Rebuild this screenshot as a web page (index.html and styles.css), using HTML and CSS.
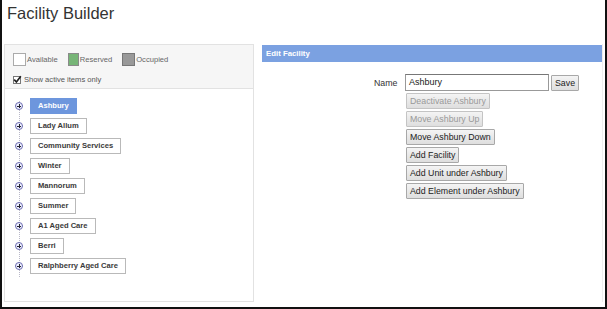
FILE: index.html
```
<!DOCTYPE html>
<html>
<head>
<meta charset="utf-8">
<link rel="stylesheet" href="styles.css">
</head>
<body>
<div class="page">
  <h1 class="title">Facility Builder</h1>
  <div class="main">
    <div class="left">
      <div class="legend-area">
        <div class="legend">
          <span class="swatch sw-avail"></span><span class="lg-text">Available</span>
          <span class="swatch sw-res"></span><span class="lg-text">Reserved</span>
          <span class="swatch sw-occ"></span><span class="lg-text">Occupied</span>
        </div>
        <label class="active-only"><span class="cb"><svg width="9" height="9" viewBox="0 0 9 9"><path d="M1.2 4.6 L3.4 7 L7.8 1.2" fill="none" stroke="#222" stroke-width="1.7"/></svg></span>Show active items only</label>
      </div>
      <div class="tree">
        <div class="row"><span class="plus"></span><span class="node sel">Ashbury</span></div>
        <div class="row"><span class="plus"></span><span class="node">Lady Allum</span></div>
        <div class="row"><span class="plus"></span><span class="node">Community Services</span></div>
        <div class="row"><span class="plus"></span><span class="node">Winter</span></div>
        <div class="row"><span class="plus"></span><span class="node">Mannorum</span></div>
        <div class="row"><span class="plus"></span><span class="node">Summer</span></div>
        <div class="row"><span class="plus"></span><span class="node">A1 Aged Care</span></div>
        <div class="row"><span class="plus"></span><span class="node">Berri</span></div>
        <div class="row"><span class="plus"></span><span class="node">Ralphberry Aged Care</span></div>
      </div>
    </div>
    <div class="right">
      <div class="header">Edit Facility</div>
      <div class="form">
        <div class="name-row">
          <span class="label">Name</span>
          <span class="input">Ashbury</span>
          <span class="btn">Save</span>
        </div>
        <div class="actions">
          <span class="btn dis">Deactivate Ashbury</span>
          <span class="btn dis">Move Ashbury Up</span>
          <span class="btn">Move Ashbury Down</span>
          <span class="btn">Add Facility</span>
          <span class="btn">Add Unit under Ashbury</span>
          <span class="btn">Add Element under Ashbury</span>
        </div>
      </div>
    </div>
  </div>
</div>
</body>
</html>
```
FILE: styles.css
```
* { box-sizing: border-box; }
html, body { margin: 0; padding: 0; background: #fff; }
body { width: 607px; height: 309px; overflow: hidden; font-family: "Liberation Sans", Arial, sans-serif; }
.page {
  width: 607px; height: 309px;
  border-left: 2px solid #111; border-right: 2px solid #111; border-bottom: 2px solid #111;
  padding: 0 0 0 2px;
}
.title {
  margin: 0; padding: 3px 0 0 3px;
  font-size: 16.5px; font-weight: normal; color: #333; line-height: 20px;
  height: 44px;
}
.main { display: flex; gap: 8px; }
.left {
  width: 250px; height: 258px;
  border: 1px solid #e2e2e2;
  background: #fff;
}
.legend-area {
  background: #f6f6f6; border-bottom: 1px solid #e2e2e2;
  padding: 7px 8px 0 8px; height: 44px;
}
.legend { display: flex; align-items: center; height: 14px; }
.swatch { width: 13px; height: 13px; border: 1px solid #9a9a9a; display: inline-block; margin-right: 1px; }
.sw-avail { background: #fff; border-color: #aaa; }
.sw-res { background: #77b577; border-color: #8a8a8a; width: 11px; }
.sw-occ { background: #999; border-color: #777; }
.lg-text { font-size: 7.6px; color: #666; margin-right: 10px; }
.active-only { display: flex; align-items: center; margin-top: 9px; font-size: 7.6px; color: #555; }
.cb { width: 8px; height: 8px; background: #fff; border: 1px solid #777; margin-right: 3px; display: inline-flex; align-items: center; justify-content: center; overflow: visible; }
.cb svg { margin-top: -1px; flex: none; }
.tree { position: relative; padding: 7px 0 0 10px; }
.tree::before {
  content: ""; position: absolute; left: 14px; top: 12px; height: 176px;
  border-left: 1px dotted #b8b8c8;
}
.row { display: flex; align-items: center; height: 20px; }
.plus {
  position: relative; z-index: 1;
  width: 8px; height: 8px; border-radius: 50%; background: #eef0ff; border: 1px solid #6b6bb0;
  margin: 0 7px 0 0; flex: none;
}
.plus::before { content: ""; position: absolute; left: 1px; top: 2.5px; width: 4px; height: 1px; background: #223; }
.plus::after { content: ""; position: absolute; left: 2.5px; top: 1px; width: 1px; height: 4px; background: #223; }
.node {
  display: inline-block; height: 16px; line-height: 14px;
  padding: 0 7px; border: 1px solid #b9b9b9; background: #fff;
  font-size: 7.6px; font-weight: bold; color: #3a3a3a;
}
.node.sel { background: #6d96dd; border-color: #6d96dd; color: #fff; padding: 0 7px; }
.right { flex: 1; height: 258px; border-right: 1px solid #eee; margin-right: 2px; }
.header {
  height: 17px; background: #7ba1e1; color: #fff;
  font-size: 7.8px; font-weight: bold; line-height: 17px; padding-left: 4px;
  margin-top: 1px;
}
.form { padding: 12px 0 0 112px; }
.name-row { display: flex; align-items: center; height: 17px; }
.label { font-size: 8.8px; color: #333; width: 31px; }
.input {
  width: 144px; height: 17px; border: 1px solid #999; border-top-color: #777;
  font-size: 9px; line-height: 15px; padding-left: 3px; color: #222; margin-right: 2px;
}
.btn {
  display: inline-block; height: 16px; line-height: 14px; padding: 0 3px;
  border: 1px solid #a8a8a8; border-radius: 1px;
  background: linear-gradient(#f4f4f4, #dedede);
  font-size: 8.8px; color: #222; white-space: nowrap;
}
.btn.dis { color: #999; border-color: #c4c4c4; }
.actions { display: flex; flex-direction: column; align-items: flex-start; gap: 2px; padding-left: 32px; margin-top: 2px; }
```
